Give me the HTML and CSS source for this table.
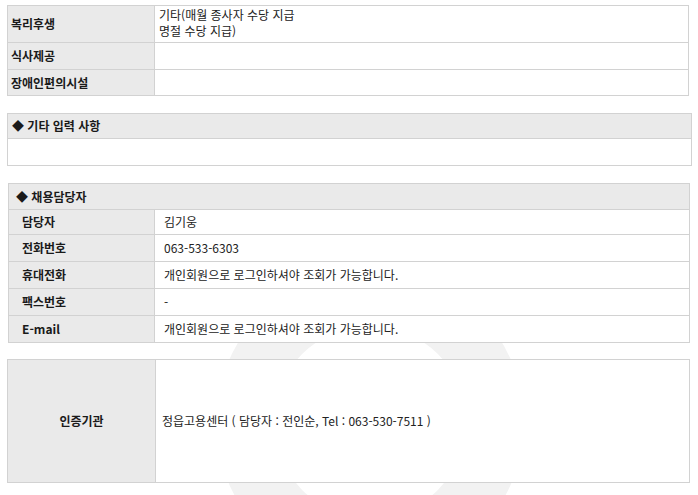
FILE: index.html
```html
<!DOCTYPE html>
<html lang="ko">
<head>
<meta charset="utf-8">
<link rel="stylesheet" href="styles.css">
</head>
<body>
<div class="watermark" aria-hidden="true">
  <svg width="320" height="320" viewBox="0 0 320 320">
    <circle cx="160" cy="160" r="125" fill="none" stroke="#f2f2f2" stroke-width="58"/>
  </svg>
</div>
<div class="page">
  <table class="tbl t1">
    <tr class="r1">
      <th>복리후생</th>
      <td class="top">기타(매월 종사자 수당 지급<br>명절 수당 지급)</td>
    </tr>
    <tr class="r2">
      <th>식사제공</th>
      <td></td>
    </tr>
    <tr class="r3">
      <th>장애인편의시설</th>
      <td></td>
    </tr>
  </table>

  <table class="tbl t2">
    <tr class="head"><th>◆ 기타 입력 사항</th></tr>
    <tr class="body"><td></td></tr>
  </table>

  <table class="tbl t3">
    <tr class="head"><th colspan="2">◆ 채용담당자</th></tr>
    <tr class="first"><th class="lab">담당자</th><td class="val">김기웅</td></tr>
    <tr><th class="lab">전화번호</th><td class="val">063-533-6303</td></tr>
    <tr><th class="lab">휴대전화</th><td class="val">개인회원으로 로그인하셔야 조회가 가능합니다.</td></tr>
    <tr><th class="lab">팩스번호</th><td class="val">-</td></tr>
    <tr><th class="lab">E-mail</th><td class="val">개인회원으로 로그인하셔야 조회가 가능합니다.</td></tr>
  </table>

  <table class="tbl t4">
    <tr>
      <th class="center">인증기관</th>
      <td>정읍고용센터 ( 담당자 : 전인순, Tel : 063-530-7511 )</td>
    </tr>
  </table>
</div>
</body>
</html>
```

FILE: styles.css
```css
html, body {
  margin: 0;
  padding: 0;
  background: #ffffff;
}
html {
  height: 495px;
  overflow: hidden;
}
body {
  font-family: "Noto Sans CJK KR", "Noto Sans", sans-serif;
  font-size: 12px;
  color: #222;
  position: relative;
  width: 698px;
  height: 495px;
  overflow: hidden;
}
.watermark {
  position: absolute;
  left: 210px;
  top: 262px;
  height: 233px;
  overflow: hidden;
  z-index: 0;
}
.page {
  position: relative;
  z-index: 1;
  display: flex;
  flex-direction: column;
  padding: 5px 0 0 7px;
}
.tbl {
  border-collapse: collapse;
  background: #fff;
}
.tbl th, .tbl td {
  border: 1px solid #d2d2d2;
  padding: 0;
  line-height: 16px;
  vertical-align: middle;
  text-align: left;
}
.tbl th {
  background: #eaeaea;
  font-weight: bold;
  color: #1a1a1a;
}
.t1 { width: 682px; }
.t1 th { width: 143px; padding-left: 3px; }
.t1 td { padding-left: 4px; }
.t1 td.top { vertical-align: top; padding-top: 1px; }
.t1 .r1 th, .t1 .r1 td { height: 35px; }
.t1 .r2 th, .t1 .r2 td { height: 26px; }
.t1 .r3 th, .t1 .r3 td { height: 25px; }

.t2 { width: 685px; margin-top: 17px; }
.t2 .head th { height: 24px; padding-left: 4px; }
.t2 .body td { height: 26px; }

.t3 { width: 682px; margin-top: 17px; margin-left: 1px; }
.t3 .head th { height: 25px; padding-left: 7px; }
.t3 .lab { width: 132px; padding-left: 13px; height: 26px; }
.t3 .first .lab { height: 24px; }
.t3 .val { padding-left: 9px; }

.t4 { width: 683px; margin-top: 16px; }
.t4 th.center { width: 147px; text-align: center; height: 122px; }
.t4 td { padding-left: 6px; }
```
